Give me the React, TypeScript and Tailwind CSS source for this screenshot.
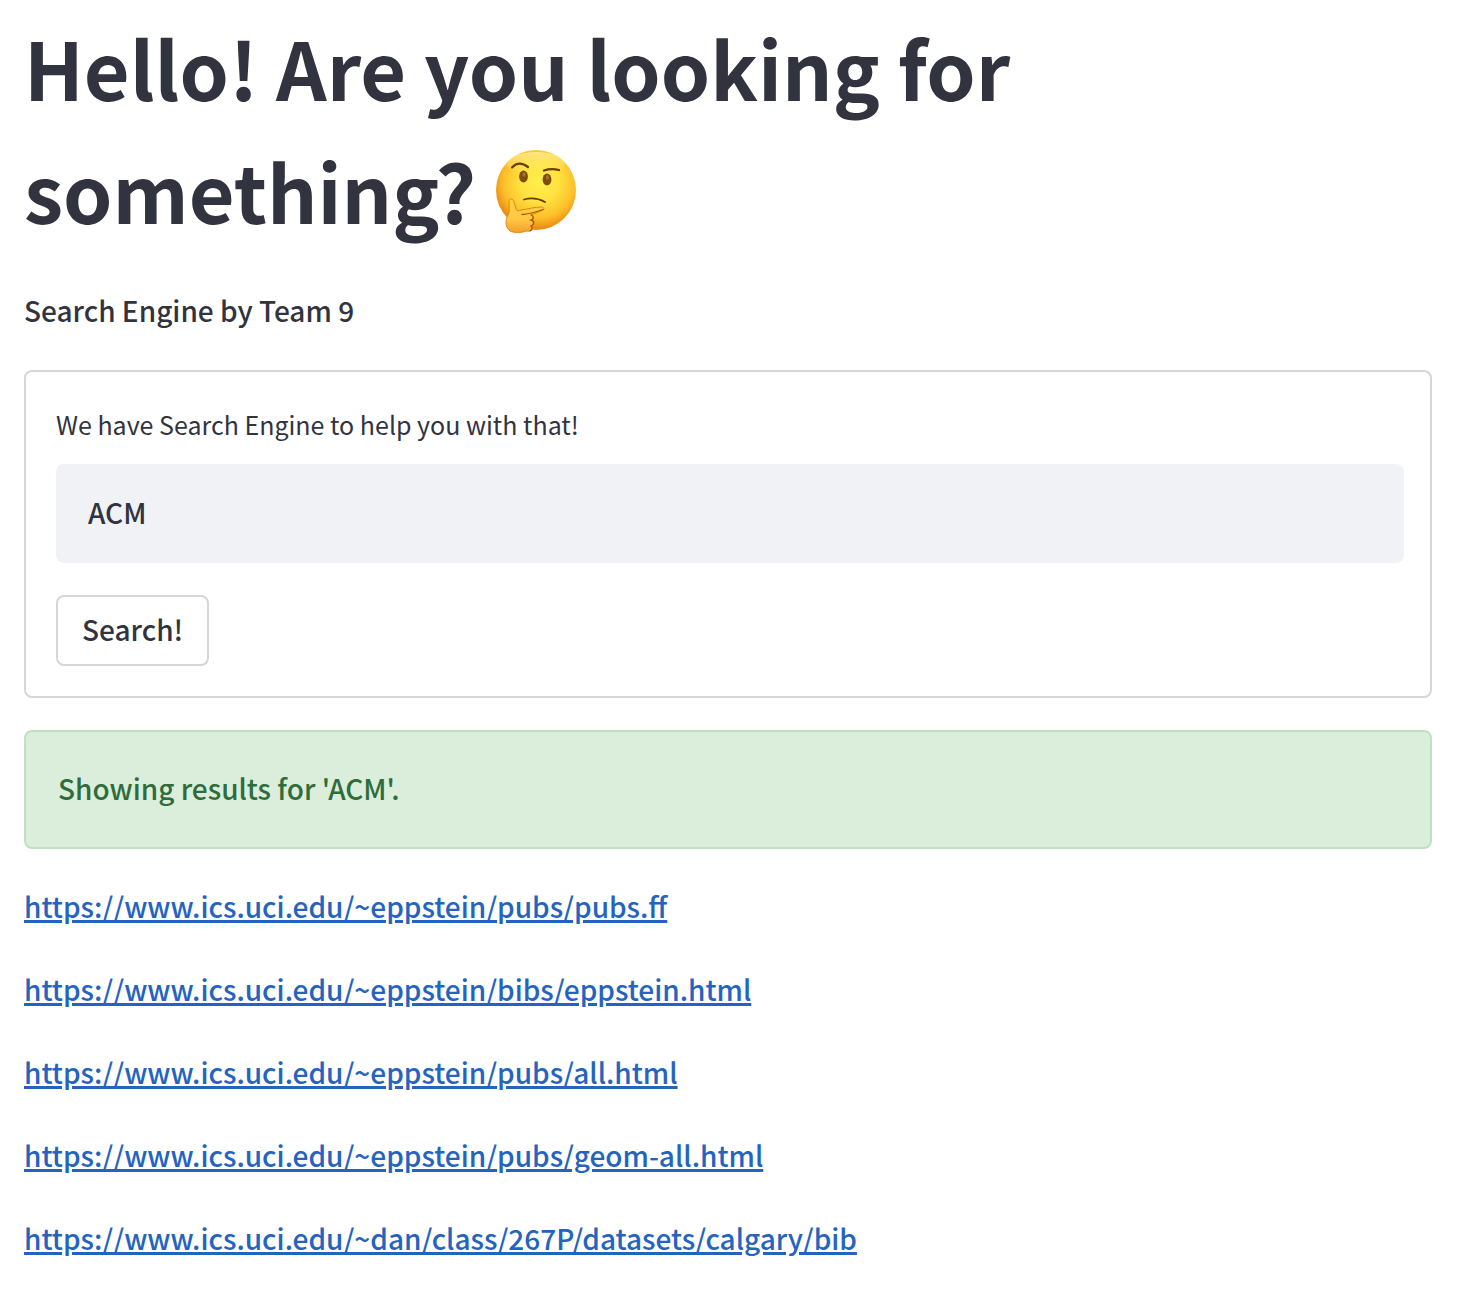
const links = [
  "https://www.ics.uci.edu/~eppstein/pubs/pubs.ff",
  "https://www.ics.uci.edu/~eppstein/bibs/eppstein.html",
  "https://www.ics.uci.edu/~eppstein/pubs/all.html",
  "https://www.ics.uci.edu/~eppstein/pubs/geom-all.html",
  "https://www.ics.uci.edu/~dan/class/267P/datasets/calgary/bib",
];

function ThinkingFace() {
  return (
    <svg viewBox="0 0 84 84" className="inline-block h-[84px] w-[84px] align-[-9px]" role="img" aria-label="thinking face">
      <defs>
        <radialGradient id="face" cx="54%" cy="40%" r="60%">
          <stop offset="0" stopColor="#fff04e" />
          <stop offset="0.4" stopColor="#ffe23f" />
          <stop offset="0.75" stopColor="#fdbf2b" />
          <stop offset="1" stopColor="#e8860c" />
        </radialGradient>
        <linearGradient id="shine" x1="0" y1="0" x2="0" y2="1">
          <stop offset="0" stopColor="#fff2b0" stopOpacity="0.7" />
          <stop offset="1" stopColor="#fff04e" stopOpacity="0" />
        </linearGradient>
        <linearGradient id="hand" x1="0" y1="0" x2="0" y2="1">
          <stop offset="0" stopColor="#ffd040" />
          <stop offset="0.6" stopColor="#ffc845" />
          <stop offset="1" stopColor="#f3a02c" />
        </linearGradient>
      </defs>
      <circle cx="42" cy="41" r="40" fill="url(#face)" />
      <ellipse cx="42" cy="15" rx="29" ry="12" fill="url(#shine)" />
      <path d="M18 18.500 Q25 11 34 18" fill="none" stroke="#6b3a08" strokeWidth="2.300" strokeLinecap="round" />
      <path d="M50 21.500 Q57 19 65 21" fill="none" stroke="#6b3a08" strokeWidth="2.300" strokeLinecap="round" />
      <ellipse cx="29.500" cy="27.500" rx="4.400" ry="6" fill="#7d4e0a" />
      <ellipse cx="53" cy="30.500" rx="4.400" ry="6" fill="#7d4e0a" />
      <ellipse cx="30" cy="25.500" rx="1.600" ry="2.200" fill="#a8741c" />
      <ellipse cx="53.500" cy="28.500" rx="1.600" ry="2.200" fill="#a8741c" />
      <path d="M30 50.500 Q41 47.500 51 53" fill="none" stroke="#6b3a08" strokeWidth="1.800" strokeLinecap="round" />
      <path
        d="M15 53 C15 49 19 49 20 53 L22 60 C23 62 25 62 27 61 C34 60 41 58 47 58 C51 58 51 61 47 62 L37 66 C40 67 40 70 38.500 71 C41 73 40 76 38 77 C39 81 36 83 32 82 C27 84 20 84 16 82 C10 77 12 70 14 66 C16 62 15 58 15 53 Z"
        fill="url(#hand)"
        stroke="#d9800f"
        strokeWidth="0.900"
      />
      <path d="M28 65.500 C35 65 42 63 49 60.500 M37 66 C40 67 40 70 37 71 C41 72 40 76 37 77 C39 79 38 81 36 82" fill="none" stroke="#a8560a" strokeWidth="1.300" strokeLinecap="round" />
    </svg>
  );
}

export default function App() {
  return (
    <main className="min-h-screen bg-white pt-[5px] pl-6 pr-[34px] font-['Noto_Sans_CJK_SC',sans-serif] text-[28px] leading-[51px] font-medium text-[#31333f]">
      <h1 className="max-w-[1100px] pb-[34px] text-[79px] leading-[123px] font-bold">
        Hello! Are you looking for something? <ThinkingFace />
      </h1>
      <p>Search Engine by Team 9</p>
      <form className="mt-[34px] rounded-lg border-2 border-[#d6d6d9] py-[30px] pr-[26px] pl-[30px]" onSubmit={(e) => e.preventDefault()}>
        <label htmlFor="query" className="block pb-[18px] text-[25px] leading-[44px] font-normal">We have Search Engine to help you with that!</label>
        <input id="query" type="text" defaultValue="ACM" className="block h-[99px] w-full rounded-lg bg-[#f0f2f6] px-8 pb-1 outline-none" />
        <button type="submit" className="mt-8 block h-[71px] rounded-lg border-2 border-[#d6d6d9] bg-white px-6 pb-[2px]">Search!</button>
      </form>
      <div role="status" className="mt-8 rounded-lg border-2 border-[#bfe1c1] bg-[#dbeedb] px-8 pt-[31px] pb-[33px] text-[#2f6c3b]">Showing results for 'ACM'.</div>
      <ul className="mt-8">
        {links.map((url) => (
          <li key={url} className="pb-8"><a href={url} className="text-[#2463c0] underline decoration-[3px] underline-offset-[2px]">{url}</a></li>
        ))}
      </ul>
    </main>
  );
}
